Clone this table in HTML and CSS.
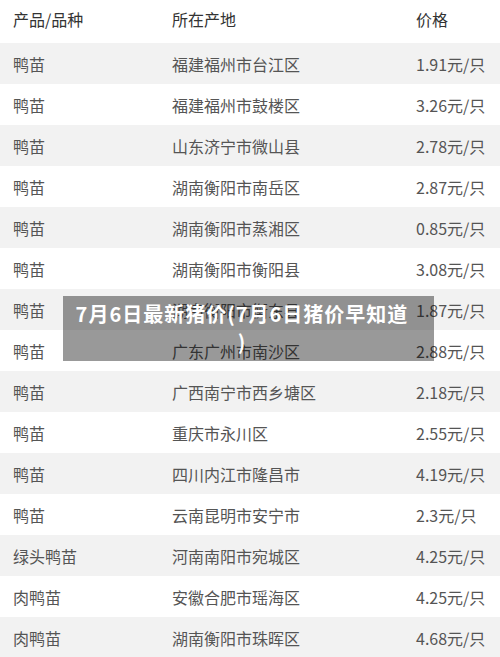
FILE: index.html
```html
<!DOCTYPE html>
<html lang="zh">
<head>
<meta charset="utf-8">
<link rel="stylesheet" href="styles.css">
</head>
<body>
<div class="table">
  <div class="row head"><div class="c1">产品/品种</div><div class="c2">所在产地</div><div class="c3">价格</div></div>
  <div class="row"><div class="c1">鸭苗</div><div class="c2">福建福州市台江区</div><div class="c3">1.91元/只</div></div>
  <div class="row"><div class="c1">鸭苗</div><div class="c2">福建福州市鼓楼区</div><div class="c3">3.26元/只</div></div>
  <div class="row"><div class="c1">鸭苗</div><div class="c2">山东济宁市微山县</div><div class="c3">2.78元/只</div></div>
  <div class="row"><div class="c1">鸭苗</div><div class="c2">湖南衡阳市南岳区</div><div class="c3">2.87元/只</div></div>
  <div class="row"><div class="c1">鸭苗</div><div class="c2">湖南衡阳市蒸湘区</div><div class="c3">0.85元/只</div></div>
  <div class="row"><div class="c1">鸭苗</div><div class="c2">湖南衡阳市衡阳县</div><div class="c3">3.08元/只</div></div>
  <div class="row"><div class="c1">鸭苗</div><div class="c2">湖南衡阳市衡东县</div><div class="c3">1.87元/只</div></div>
  <div class="row"><div class="c1">鸭苗</div><div class="c2">广东广州市南沙区</div><div class="c3">2.88元/只</div></div>
  <div class="row"><div class="c1">鸭苗</div><div class="c2">广西南宁市西乡塘区</div><div class="c3">2.18元/只</div></div>
  <div class="row"><div class="c1">鸭苗</div><div class="c2">重庆市永川区</div><div class="c3">2.55元/只</div></div>
  <div class="row"><div class="c1">鸭苗</div><div class="c2">四川内江市隆昌市</div><div class="c3">4.19元/只</div></div>
  <div class="row"><div class="c1">鸭苗</div><div class="c2">云南昆明市安宁市</div><div class="c3">2.3元/只</div></div>
  <div class="row"><div class="c1">绿头鸭苗</div><div class="c2">河南南阳市宛城区</div><div class="c3">4.25元/只</div></div>
  <div class="row"><div class="c1">肉鸭苗</div><div class="c2">安徽合肥市瑶海区</div><div class="c3">4.25元/只</div></div>
  <div class="row"><div class="c1">肉鸭苗</div><div class="c2">湖南衡阳市珠晖区</div><div class="c3">4.68元/只</div></div>
</div>
<div class="caption">7月6日最新猪价(7月6日猪价早知道)</div>
</body>
</html>
```
FILE: styles.css
```css
html, body {
  margin: 0;
  padding: 0;
  background: #fff;
}
body {
  font-family: "Noto Sans CJK SC", "Noto Sans", sans-serif;
  font-size: 16px;
  color: #555;
  overflow: hidden;
  height: 657px;
  position: relative;
}
.table {
  display: flex;
  flex-direction: column;
}
.row {
  display: grid;
  grid-template-columns: 159px 244px 1fr;
  height: 41px;
  align-items: center;
  line-height: 20px;
}
.row > div {
  padding-left: 13px;
  white-space: nowrap;
}
.row:nth-child(even) {
  background: #f2f2f2;
}
.head {
  height: 43px;
  box-sizing: border-box;
  padding-bottom: 6px;
  color: #333;
}
.caption {
  position: absolute;
  left: 63px;
  top: 296px;
  width: 371px;
  box-sizing: border-box;
  padding: 4px 24px 5px 11px;
  background: rgba(0, 0, 0, 0.4);
  color: #fff;
  font-weight: bold;
  font-size: 20px;
  line-height: 28px;
  letter-spacing: 1px;
  text-align: center;
  line-break: anywhere;
  word-break: break-all;
}
```
